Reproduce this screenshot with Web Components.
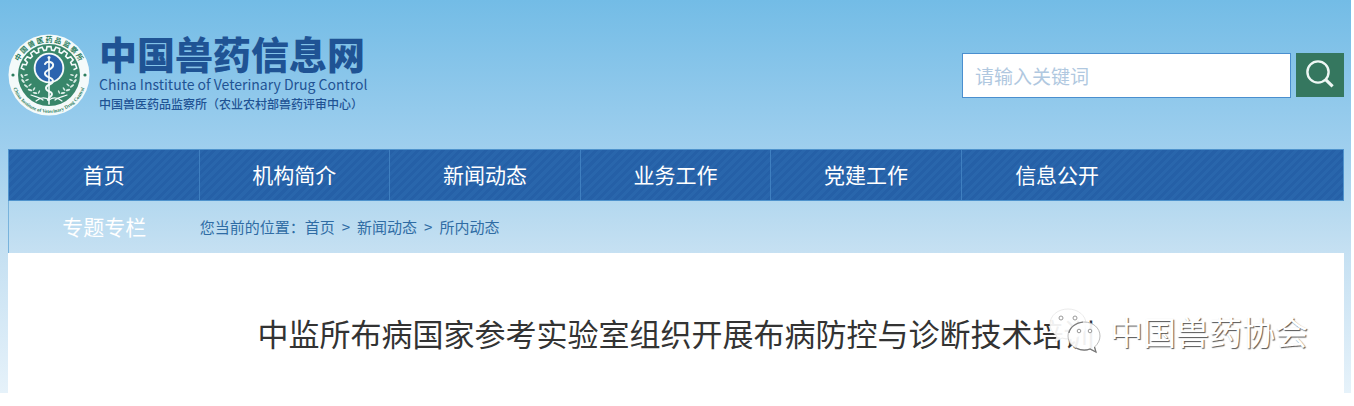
<!DOCTYPE html>
<html lang="zh-CN">
<head>
<meta charset="utf-8">
<title>中国兽药信息网</title>
<style>
  body {
    margin: 0;
    background: #fff;
    font-family: "Noto Sans CJK SC", sans-serif;
  }
</style>
</head>
<body>
<vet-page>
  <vet-header slot="header">
    <vet-brand></vet-brand>
    <vet-search></vet-search>
  </vet-header>
  <vet-nav slot="nav">
    <a href="#home">首页</a>
    <a href="#about">机构简介</a>
    <a href="#news">新闻动态</a>
    <a href="#work">业务工作</a>
    <a href="#party">党建工作</a>
    <a href="#open">信息公开</a>
  </vet-nav>
  <vet-crumbs slot="crumbs">
    <a slot="topic" href="#topics">专题专栏</a>
    <span>您当前的位置：</span>
    <a href="#home">首页</a>
    <span class="sep">&gt;</span>
    <a href="#news">新闻动态</a>
    <span class="sep">&gt;</span>
    <a href="#inside">所内动态</a>
  </vet-crumbs>
  <vet-article>
    中监所布病国家参考实验室组织开展布病防控与诊断技术培训
    <vet-watermark slot="mark">中国兽药协会</vet-watermark>
  </vet-article>
</vet-page>

<script>
class VetPage extends HTMLElement {
  connectedCallback() {
    this.attachShadow({ mode: 'open' }).innerHTML =
      /*template*/
      `
        <style>
          :host {
            display: block;
            margin-right: 3px;
            padding: 0 7px 0 8px;
            background: linear-gradient(#73bce6, #9fcfee 38%, #b3d8ef 51%, #c5e0f2 64%, #e6f2fa);
          }
        </style>
        <slot name="header"></slot>
        <slot name="nav"></slot>
        <slot name="crumbs"></slot>
        <main><slot></slot></main>
      `;
  }
}

class VetHeader extends HTMLElement {
  connectedCallback() {
    this.attachShadow({ mode: 'open' }).innerHTML =
      /*template*/
      `
        <style>
          :host {
            display: block;
          }
          header {
            display: flex;
            justify-content: space-between;
            align-items: center;
            height: 149px;
          }
        </style>
        <header><slot></slot></header>
      `;
  }
}

class VetBrand extends HTMLElement {
  // square wave along the upper arc of the emblem
  gear() {
    const at = (r, deg) => {
      const a = deg * Math.PI / 180;
      return `${(41 + r * Math.sin(a)).toFixed(1)} ${(41 - r * Math.cos(a)).toFixed(1)}`;
    };
    const points = [];
    for (let deg = -72; deg <= 72; deg += 18) {
      points.push(at(25, deg - 6), at(28.5, deg - 4), at(28.5, deg + 4), at(25, deg + 6));
    }
    return `M${points.join('L')}`;
  }

  connectedCallback() {
    const leaves = [[14, 42, 60], [15, 47, 50], [18, 52, 35], [22, 56, 20], [27, 59, 10]]
      .map(([x, y, a]) => `<ellipse cx="${x}" cy="${y}" rx="2.4" ry="1" transform="rotate(${a} ${x} ${y})"/>` +
        `<ellipse cx="${x + 4}" cy="${y - 1}" rx="2" ry=".8" transform="rotate(${a - 75} ${x + 4} ${y - 1})"/>`).join('');

    this.attachShadow({ mode: 'open' }).innerHTML =
      /*template*/
      `
        <style>
          :host {
            display: flex;
            align-items: center;
            gap: 9px;
            color: #1f5394;
          }
          svg {
            width: 82px;
            height: 82px;
            flex: none;
          }
          .ring {
            fill: #2c7d5e;
            font-weight: 700;
            text-anchor: middle;
          }
          h1, p {
            margin: 0;
            white-space: nowrap;
          }
          h1 {
            padding-bottom: 2px;
            font-size: 38px;
            line-height: 38px;
            font-weight: 900;
          }
          .en {
            font-size: 14px;
            line-height: 20px;
          }
          .org {
            padding-bottom: 2px;
            font-size: 12px;
            line-height: 20px;
            font-weight: 500;
          }
        </style>
        <svg viewBox="0 0 82 82">
          <defs>
            <path id="top" d="M8 41a33 33 0 0 1 66 0"/>
            <path id="bottom" d="M3 41a38 38 0 0 0 76 0"/>
          </defs>
          <circle cx="41" cy="41" r="40.5" fill="#f4fafa"/>
          <circle cx="41" cy="41" r="31" fill="#38866a"/>
          <text class="ring" font-size="7"><textPath href="#top" startOffset="50%">中 国 兽 医 药 品 监 察 所</textPath></text>
          <text class="ring" font-size="5" font-family="Liberation Serif"><textPath href="#bottom" startOffset="50%">China Institute of Veterinary Drug Control</textPath></text>
          <path d="${this.gear()}" fill="none" stroke="#f4fafa" stroke-width="1.6"/>
          <circle cx="41" cy="34" r="15.3" fill="#f4fafa"/>
          <circle cx="41" cy="34" r="13.4" fill="#2b64af"/>
          <g fill="none" stroke="#f4fafa" stroke-linecap="round">
            <path d="M41 25v45" stroke-width="1.6"/>
            <path d="M37 30c2-4 9-2 8 2s-9 4-8 8 8 3 8 7-7 3-7 7 6 3 6 6-4 3-4 6" stroke-width="2"/>
            <path d="M28 67c5-4 9-4 13-1 4-3 8-3 13 1M23 61c5 2 9 2 12 5M59 61c-5 2-9 2-12 5" stroke-width="1.2"/>
          </g>
          <circle cx="41" cy="23.5" r="1.5" fill="#f4fafa"/>
          <g fill="#d9ece5">${leaves}</g>
          <g fill="#d9ece5" transform="matrix(-1 0 0 1 82 0)">${leaves}</g>
          <circle cx="5" cy="41" r="1.6" fill="#2c7d5e"/>
          <circle cx="77" cy="41" r="1.6" fill="#2c7d5e"/>
        </svg>
        <div>
          <h1>中国兽药信息网</h1>
          <p class="en">China Institute of Veterinary Drug Control</p>
          <p class="org">中国兽医药品监察所（农业农村部兽药评审中心）</p>
        </div>
      `;
  }
}

class VetSearch extends HTMLElement {
  connectedCallback() {
    this.attachShadow({ mode: 'open' }).innerHTML =
      /*template*/
      `
        <style>
          :host {
            display: block;
            flex: 0 1 382px;
            padding-top: 2px;
          }
          form {
            display: flex;
            gap: 5px;
          }
          input {
            box-sizing: border-box;
            flex: 1;
            min-width: 0;
            height: 45px;
            padding: 0 12px;
            border: 1px solid #4a8fcf;
            background: #fff;
            color: #1f5394;
            font: inherit;
            font-size: 19px;
          }
          input::placeholder {
            color: #b0c8e0;
            opacity: 1;
          }
          button {
            display: grid;
            place-items: center;
            width: 48px;
            height: 44px;
            padding: 0;
            border: 0;
            background: #35775f;
          }
        </style>
        <form role="search">
          <input type="search" placeholder="请输入关键词" aria-label="请输入关键词">
          <button type="button" aria-label="搜索">
            <svg width="30" height="30" viewBox="0 0 30 30" fill="none" stroke="#eef7f4" stroke-width="2.4">
              <circle cx="13" cy="12" r="10.6"/>
              <path d="M20.4 19.4l7.2 7" stroke-width="3.2"/>
            </svg>
          </button>
        </form>
      `;
  }
}

class VetNav extends HTMLElement {
  connectedCallback() {
    this.attachShadow({ mode: 'open' }).innerHTML =
      /*template*/
      `
        <style>
          :host {
            display: block;
          }
          nav {
            display: grid;
            grid-template-columns: repeat(7, 1fr);
            box-sizing: border-box;
            height: 52px;
            border: 1px solid #4f93cd;
            background: repeating-linear-gradient(135deg, #2560a7 0 3px, #2966ac 3px 6px);
          }
          ::slotted(a) {
            border-right: 1px solid #3f7fc0;
            color: #fff;
            font-size: 21px;
            line-height: 48px;
            text-align: center;
            text-decoration: none;
          }
          ::slotted(a:last-child) {
            border-right: 0;
          }
        </style>
        <nav><slot></slot></nav>
      `;
  }
}

class VetCrumbs extends HTMLElement {
  connectedCallback() {
    this.attachShadow({ mode: 'open' }).innerHTML =
      /*template*/
      `
        <style>
          :host {
            display: block;
          }
          .bar {
            display: grid;
            grid-template-columns: 1fr 6fr;
            border-left: 1px solid #78b3dc;
            line-height: 52px;
          }
          .path {
            display: flex;
            font-size: 15px;
          }
          ::slotted(*) {
            color: #2f6ca4;
            text-decoration: none;
          }
          ::slotted(.sep) {
            padding: 0 7px;
          }
          ::slotted([slot="topic"]) {
            color: #fff;
            font-size: 21px;
            line-height: 50px;
            text-align: center;
          }
        </style>
        <div class="bar">
          <slot name="topic"></slot>
          <div class="path"><slot></slot></div>
        </div>
      `;
  }
}

class VetArticle extends HTMLElement {
  connectedCallback() {
    this.attachShadow({ mode: 'open' }).innerHTML =
      /*template*/
      `
        <style>
          :host {
            display: block;
            position: relative;
            padding: 58px 0 38px;
            background: #fff;
          }
          h2 {
            margin: 0;
            color: #333;
            font-size: 31px;
            line-height: 44px;
            font-weight: 400;
            text-align: center;
          }
        </style>
        <h2><slot></slot></h2>
        <slot name="mark"></slot>
      `;
  }
}

// lies over the end of the headline
class VetWatermark extends HTMLElement {
  connectedCallback() {
    this.attachShadow({ mode: 'open' }).innerHTML =
      /*template*/
      `
        <style>
          :host {
            position: absolute;
            right: 36px;
            top: 50px;
            display: flex;
            align-items: center;
            gap: 8px;
            color: #fff;
            font-size: 33px;
            line-height: 56px;
            text-shadow: 1px 1px 1px #555;
          }
          svg {
            width: 54px;
            height: 50px;
          }
        </style>
        <svg viewBox="0 0 54 50" aria-hidden="true">
          <path d="M20 3C10 3 2 9.5 2 18c0 5 2.6 9 7 12l-2 6 7-4c2 .6 4 1 6 1 10 0 18-6.5 18-15S30 3 20 3z" fill="#fff" fill-opacity=".93" stroke="#e2e2e2" stroke-width=".7"/>
          <path d="M36 16c-9 0-16 6-16 14s7 14 16 14c2 0 4-.3 6-1l6 3-1.5-5C50 38 52 34 52 30c0-8-7-14-16-14z" fill="#fff" fill-opacity=".93" stroke="#aaa" stroke-width=".8"/>
          <path d="M21 27c1-6 7-10 14-11M28 42c4 2 9 3 14 1l6 3-1.5-5" fill="none" stroke="#777" stroke-width="1.2"/>
          <g fill="#fff" stroke="#999" stroke-width="1">
            <circle cx="13" cy="12" r="2"/><circle cx="27" cy="12" r="2"/>
            <circle cx="31" cy="25" r="1.8"/><circle cx="42" cy="25" r="1.8"/>
          </g>
        </svg>
        <span><slot></slot></span>
      `;
  }
}

customElements.define('vet-page', VetPage);
customElements.define('vet-header', VetHeader);
customElements.define('vet-brand', VetBrand);
customElements.define('vet-search', VetSearch);
customElements.define('vet-nav', VetNav);
customElements.define('vet-crumbs', VetCrumbs);
customElements.define('vet-article', VetArticle);
customElements.define('vet-watermark', VetWatermark);
</script>
</body>
</html>
